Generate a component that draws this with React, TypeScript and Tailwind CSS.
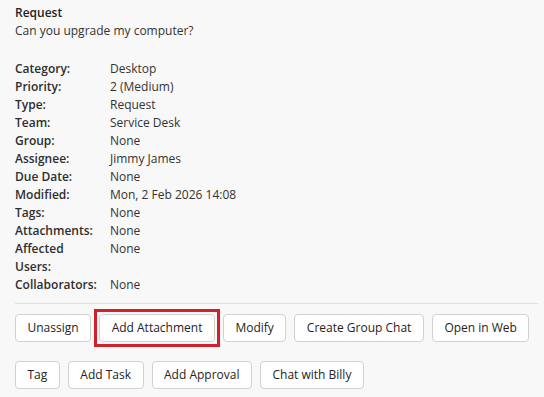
import React from "react";

const fields: [string, string][] = [
  ["Category:", "Desktop"],
  ["Priority:", "2 (Medium)"],
  ["Type:", "Request"],
  ["Team:", "Service Desk"],
  ["Group:", "None"],
  ["Assignee:", "Jimmy James"],
  ["Due Date:", "None"],
  ["Modified:", "Mon, 2 Feb 2026 14:08"],
  ["Tags:", "None"],
  ["Attachments:", "None"],
  ["Affected Users:", "None"],
  ["Collaborators:", "None"],
];

function ActionButton({ label, highlighted }: { label: string; highlighted?: boolean }) {
  const btn = (
    <button className="h-[28px] px-[11.5px] rounded-[4px] border border-[#d1d1d1] bg-white text-[#242424] text-[12px] leading-none whitespace-nowrap">
      {label}
    </button>
  );
  if (!highlighted) return btn;
  return <div className="-m-[5px] p-[2px] border-[3px] border-[#d0202a]">{btn}</div>;
}

export default function App() {
  return (
    <div className="w-[544px] h-[397px] bg-[#f8f8f8] text-[#242424] text-[12px] leading-[18px] [font-family:'Open_Sans',sans-serif] pl-[15px] pr-[6px] pt-[4px]">
      <div className="font-semibold">Request</div>
      <div className="text-[#333]">Can you upgrade my computer?</div>

      <div className="mt-[20px] flex flex-col">
        {fields.map(([label, value]) => (
          <div key={label} className="flex">
            <div className="w-[95px] shrink-0 pr-[8px] font-semibold text-[#2e2e2e]">{label}</div>
            <div className="text-[#333]">{value}</div>
          </div>
        ))}
      </div>

      <div className="mt-[9px] border-t border-[#e1e1e1]" />

      <div className="mt-[10px] flex gap-[8px]">
        <ActionButton label="Unassign" />
        <ActionButton label="Add Attachment" highlighted />
        <ActionButton label="Modify" />
        <ActionButton label="Create Group Chat" />
        <ActionButton label="Open in Web" />
      </div>
      <div className="mt-[19px] flex gap-[8px]">
        <ActionButton label="Tag" />
        <ActionButton label="Add Task" />
        <ActionButton label="Add Approval" />
        <ActionButton label="Chat with Billy" />
      </div>
    </div>
  );
}
